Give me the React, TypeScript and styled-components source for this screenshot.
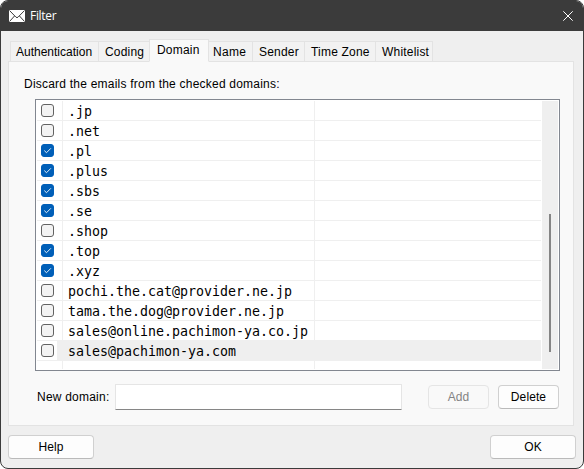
import React, { useState } from 'react';
import styled, { createGlobalStyle, css } from 'styled-components';

const GlobalStyle = createGlobalStyle`
  *, *::before, *::after { box-sizing: border-box; }
  html, body { margin: 0; padding: 0; background: #fff; overflow: hidden; }
  button, input { font: inherit; letter-spacing: inherit; }
`;

const Dialog = styled.div`
  width: 584px;
  height: 469px;
  display: flex;
  flex-direction: column;
  overflow: hidden;
  border: 1px solid #3b3b3b;
  border-radius: 8px;
  background: #efefef;
  color: #000;
  font-family: 'Liberation Sans', Arial, sans-serif;
  font-size: 12px;
  letter-spacing: 0.22px;
`;

const TitleBar = styled.header`
  height: 30px;
  flex: none;
  display: flex;
  align-items: center;
  padding: 0 10px 1px 8px;
  background: #3b3b3b;
  color: #fff;
`;

const Title = styled.h1`
  flex: 1;
  margin: 1px 0 0 5px;
  font: 400 12px/16px 'Open Sans', 'Noto Sans', sans-serif;
  letter-spacing: -0.3px;
`;

const CloseButton = styled.button`
  display: flex;
  padding: 0;
  border: 0;
  background: none;
  color: #fff;
`;

const TabList = styled.div`
  height: 31px;
  flex: none;
  display: flex;
  align-items: flex-end;
  padding-left: 9px;
  margin-bottom: -1px;
  z-index: 1;
`;

const Tab = styled.button<{ $width: number; $inset: number; $spacing: number; $active?: boolean }>`
  width: ${(p) => p.$width}px;
  height: 21px;
  flex: none;
  padding: 1px 0 0 ${(p) => p.$inset}px;
  border: 1px solid #e3e3e3;
  border-left-width: 0;
  background: #f2f2f2;
  color: #000;
  letter-spacing: ${(p) => p.$spacing}px;
  line-height: 18px;
  text-align: left;
  white-space: nowrap;

  &:first-child {
    border-left-width: 1px;
  }

  ${(p) =>
    p.$active &&
    css`
      height: 23px;
      margin-left: -1px;
      padding-bottom: 2px;
      border-left-width: 1px;
      border-bottom-color: #f9f9f9;
      background: #f9f9f9;
    `}
`;

const Panel = styled.section`
  width: 566px;
  height: 365px;
  flex: none;
  margin-left: 7px;
  padding: 15px 14px 0 15px;
  border: 1px solid #e3e3e3;
  background: #f9f9f9;
`;

const Caption = styled.p`
  height: 22px;
  margin: 0;
  line-height: 15px;
`;

const ListBox = styled.div`
  width: 525px;
  height: 272px;
  display: flex;
  margin-left: 11px;
  padding: 1px;
  border: 1px solid #828790;
  background: #fff;
`;

const Rows = styled.div`
  width: 504px;
  height: 268px;
  overflow: hidden;
  font-family: 'DejaVu Sans Mono', monospace;
  font-size: 13.29px;
  letter-spacing: 0;
`;

const Row = styled.div<{ $selected?: boolean }>`
  height: 20px;
  display: grid;
  grid-template-columns: 20px 6px 252px 1fr;
  line-height: 21px;

  > * {
    border-bottom: 1px solid #efefef;
    background: ${(p) => (p.$selected ? '#efefef' : '#fff')};
  }
`;

const CheckCell = styled.div`
  && { background: #fff; }
  padding: 3px 0 0 4px;
`;

const Gutter = styled.div`
  border-right: 1px solid #efefef;
`;

const DomainCell = styled.div`
  height: 20px;
  padding-left: 5px;
  border-right: 1px solid #efefef;
  white-space: pre;
`;

const CheckBox = styled.button<{ $on: boolean }>`
  width: 13px;
  height: 13px;
  display: block;
  padding: 0;
  border: 1px solid ${(p) => (p.$on ? '#005fb8' : '#626262')};
  border-radius: 3px;
  background: ${(p) => (p.$on ? '#005fb8' : '#f3f3f3')};

  svg { display: block; }
`;

const ScrollTrack = styled.div`
  width: 16px;
  height: 268px;
  margin-left: 1px;
  padding: 113px 0 0 7px;
  background: #efefef;
`;

const ScrollThumb = styled.div`
  width: 2px;
  height: 138px;
  background: #858585;
`;

const EntryRow = styled.div`
  display: flex;
  align-items: center;
  margin-top: 13px;
  padding-left: 13px;
`;

const EntryLabel = styled.label`
  width: 78px;
`;

const EntryField = styled.input`
  width: 287px;
  height: 26px;
  margin-right: 26px;
  padding: 0 4px;
  border: 1px solid #e5e5e5;
  border-bottom-color: #868686;
  border-radius: 1px;
  background: #fff;
  outline: none;
`;

const PushButton = styled.button<{ $wide?: boolean }>`
  width: ${(p) => (p.$wide ? 86 : 61)}px;
  height: 24px;
  padding: 0;
  border: 1px solid #d0d0d0;
  border-bottom-color: #bababa;
  border-radius: 4px;
  background: #fdfdfd;
  color: #000;
  letter-spacing: 0.1px;
  line-height: 22px;

  & + & { margin-left: 9px; }

  &:disabled {
    border-color: #e5e5e5;
    background: #f9f9f9;
    color: #838383;
  }
`;

const Footer = styled.footer`
  display: flex;
  justify-content: space-between;
  padding: 9px 7px 0;
`;

const tabs = [
  { label: 'Authentication', width: 89, inset: 5, spacing: 0 },
  { label: 'Coding', width: 51, inset: 6, spacing: 0.2 },
  { label: 'Domain', width: 60, inset: 7, spacing: 0.2 },
  { label: 'Name', width: 44, inset: 4, spacing: 0.3 },
  { label: 'Sender', width: 52, inset: 6, spacing: 0.2 },
  { label: 'Time Zone', width: 71, inset: 6, spacing: 0.2 },
  { label: 'Whitelist', width: 57, inset: 6, spacing: 0.2 },
];

const domains: [string, boolean][] = [
  ['.jp', false],
  ['.net', false],
  ['.pl', true],
  ['.plus', true],
  ['.sbs', true],
  ['.se', true],
  ['.shop', false],
  ['.top', true],
  ['.xyz', true],
  ['pochi.the.cat@provider.ne.jp', false],
  ['tama.the.dog@provider.ne.jp', false],
  ['sales@online.pachimon-ya.co.jp', false],
  ['sales@pachimon-ya.com', false],
  ['', false],
];

const MailIcon = () => (
  <svg width="16" height="12" viewBox="0 0 16 12">
    <rect width="16" height="12" fill="#fff" />
    <path d="M.5 .5L7 7.2Q8 8 9 7.2L15.5 .5M.5 11.5L5.5 6M15.5 11.5L10.5 6" fill="none" stroke="#3b3b3b" />
  </svg>
);

const CloseIcon = () => (
  <svg width="10" height="10" viewBox="0 0 10 10">
    <path d="M.3 .3L9.7 9.7M9.7 .3L.3 9.7" fill="none" stroke="currentColor" />
  </svg>
);

const CheckIcon = () => (
  <svg width="11" height="11" viewBox="0 0 11 11">
    <path d="M2.3 5.6L4.5 7.7L8.9 3.3" fill="none" stroke="#fff" strokeWidth=".9" />
  </svg>
);

export default function App() {
  const [checked, setChecked] = useState(domains.map((d) => d[1]));
  const [active, setActive] = useState('Domain');
  const toggle = (index: number) =>
    setChecked((prev) => prev.map((v, i) => (i === index ? !v : v)));

  return (
    <>
      <GlobalStyle />
      <Dialog role="dialog" aria-label="Filter">
        <TitleBar>
          <MailIcon />
          <Title>Filter</Title>
          <CloseButton aria-label="Close"><CloseIcon /></CloseButton>
        </TitleBar>
        <TabList role="tablist">
          {tabs.map((t) => (
            <Tab
              key={t.label}
              role="tab"
              $width={t.width}
              $inset={t.inset}
              $spacing={t.spacing}
              $active={t.label === active}
              onClick={() => setActive(t.label)}
            >
              {t.label}
            </Tab>
          ))}
        </TabList>
        <Panel>
          <Caption>Discard the emails from the checked domains:</Caption>
          <ListBox>
            <Rows>
              {domains.map(([name], i) => (
                <Row key={i} $selected={i === 12}>
                  <CheckCell>
                    {name && (
                      <CheckBox role="checkbox" aria-label={name} aria-checked={checked[i]} $on={checked[i]} onClick={() => toggle(i)}>
                        {checked[i] && <CheckIcon />}
                      </CheckBox>
                    )}
                  </CheckCell>
                  <Gutter />
                  <DomainCell>{name}</DomainCell>
                  <div />
                </Row>
              ))}
            </Rows>
            <ScrollTrack><ScrollThumb /></ScrollTrack>
          </ListBox>
          <EntryRow>
            <EntryLabel htmlFor="domain">New domain:</EntryLabel>
            <EntryField id="domain" />
            <PushButton disabled>Add</PushButton>
            <PushButton>Delete</PushButton>
          </EntryRow>
        </Panel>
        <Footer>
          <PushButton $wide>Help</PushButton>
          <PushButton $wide>OK</PushButton>
        </Footer>
      </Dialog>
    </>
  );
}
